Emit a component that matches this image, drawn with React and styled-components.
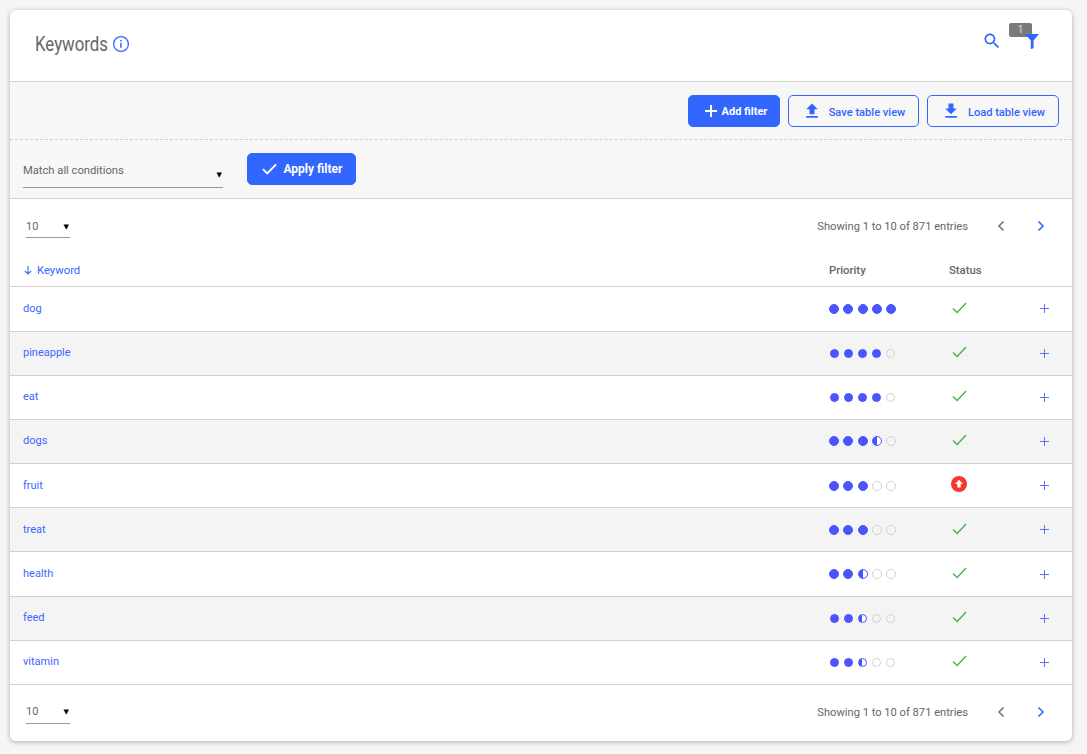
import React from 'react';
import styled, { createGlobalStyle } from 'styled-components';

const Global = createGlobalStyle`
  html, body { margin: 0; padding: 0; background: #f5f5f5; }
  body { font-family: Roboto, "Liberation Sans", sans-serif; color: #666; font-size: 12px; }
  * { box-sizing: border-box; }
`;

const BLUE = '#3366ff';
const DOT = '#4a55ff';

const Page = styled.div`
  padding: 10px 15px 13px 10px;
  height: 754px;
  overflow: hidden;
`;
const Card = styled.main`
  background: #fff;
  border-radius: 6px;
  box-shadow: 0 1px 5px rgba(0, 0, 0, 0.3);
  height: 731px;
  overflow: hidden;
`;
const Header = styled.header`
  height: 72px;
  border-bottom: 1px solid #d2d2d2;
  padding: 0 33px 0 25px;
  display: flex;
  align-items: center;
  justify-content: space-between;
`;
const TitleWrap = styled.div`
  display: flex;
  align-items: center;
  gap: 5px;
  margin-top: -3px;
`;
const Title = styled.h1`
  margin: 0;
  font-size: 20px;
  line-height: 24px;
  font-weight: 400;
  color: #666;
  width: 72px;
  white-space: nowrap;
  transform: scaleX(0.84);
  transform-origin: left center;
`;
const HeaderActions = styled.div`
  display: flex;
  align-items: center;
  gap: 26px;
  margin-top: -9px;
`;
const FilterIconWrap = styled.div`
  position: relative;
  width: 14px;
  height: 15px;
  display: flex;
  & > svg { position: relative; z-index: 1; }
`;
const Badge = styled.span`
  position: absolute;
  left: -16px;
  top: -11px;
  width: 23px;
  height: 14px;
  background: #7a7a7a;
  color: #ddd;
  border-radius: 2px;
  font-size: 10px;
  line-height: 13px;
  text-align: center;
`;
const Toolbar = styled.div`
  height: 58px;
  background: #f7f7f7;
  border-bottom: 1px dashed #cfcfcf;
  padding: 13px 13px 0 0;
  display: flex;
  justify-content: flex-end;
  gap: 8px;
`;
const Button = styled.button`
  height: 32px;
  width: ${p => p.$w}px;
  border-radius: 5px;
  border: 1px solid ${BLUE};
  background: ${p => (p.$solid ? BLUE : 'transparent')};
  color: ${p => (p.$solid ? '#fff' : BLUE)};
  font-family: Roboto, "Liberation Sans", sans-serif;
  font-size: ${p => p.$fs}px;
  font-weight: ${p => (p.$solid ? 700 : 500)};
  display: flex;
  align-items: center;
  justify-content: center;
  gap: ${p => p.$gap}px;
  padding: 0 0 0 ${p => p.$pl || 0}px;
`;
const OutlineLabel = styled.span`
  margin-top: 2px;
`;
const FilterRow = styled.div`
  height: 59px;
  background: #f7f7f7;
  border-bottom: 1px solid #d2d2d2;
  padding: 13px 0 0 13px;
  display: flex;
  align-items: flex-start;
  gap: 24px;
`;
const Select = styled.div`
  width: ${p => p.$w}px;
  height: ${p => p.$h}px;
  border-bottom: 1px solid #9a9a9a;
  display: flex;
  justify-content: space-between;
  color: #666;
  font-size: ${p => p.$fs}px;
  padding-top: ${p => p.$top}px;
  line-height: 14px;
`;
const Arrow = styled.span`
  color: #000;
  font-size: 7px;
  line-height: 14px;
  margin-top: ${p => p.$drop}px;
  margin-right: 1px;
  font-family: "DejaVu Sans", sans-serif;
`;
const Pager = styled.div`
  height: ${p => p.$h}px;
  padding: ${p => p.$top}px 25px 0 16px;
  display: flex;
  align-items: flex-start;
  justify-content: space-between;
`;
const PagerRight = styled.div`
  display: flex;
  align-items: center;
  height: 16px;
  margin-top: 3px;
`;
const Entries = styled.span`
  font-size: 11.15px;
  color: #666;
  margin-right: 27px;
`;
const ChevButton = styled.span`
  display: flex;
  width: 12px;
  justify-content: center;
  margin-right: ${p => p.$mr}px;
`;
const Grid = styled.div`
  display: grid;
  grid-template-columns: 806px 120px 1fr 40px;
  align-items: center;
  padding-left: 13px;
`;
const HeadRow = styled(Grid)`
  height: 35.32px;
  border-bottom: 1px solid #d2d2d2;
  font-size: 11.3px;
  font-weight: 500;
  color: #666;
  padding-top: 2px;
`;
const SortHead = styled.span`
  color: ${BLUE};
  display: flex;
  align-items: center;
  gap: 4px;
  font-weight: 400;
`;
const Row = styled(Grid)`
  height: 44.19px;
  border-bottom: 1px solid #d2d2d2;
  background: ${p => (p.$alt ? '#f4f4f4' : '#fff')};
`;
const KeywordLink = styled.a`
  color: #3f66ff;
  font-size: 11px;
  margin-top: -1px;
`;
const Dots = styled.div`
  display: flex;
  align-items: center;
  width: 67px;
  justify-content: space-between;
  padding: 0 ${p => (p.$small ? 1 : 0)}px;
`;
const Dot = styled.span`
  width: ${p => p.$size}px;
  height: ${p => p.$size}px;
  border-radius: 50%;
  border: 1px solid ${p => (p.$v === 0 ? '#d2d2d2' : DOT)};
  background: ${p =>
    p.$v === 1 ? DOT : p.$v === 0.5 ? `linear-gradient(90deg, ${DOT} 50%, #fff 50%)` : 'transparent'};
`;
const StatusCell = styled.div`
  display: flex;
  padding-left: ${p => p.$pad}px;
  margin-top: ${p => p.$mt}px;
`;
const PlusCell = styled.div`
  display: flex;
  margin-left: 8px;
`;

const SearchIcon = () => (
  <svg width="20" height="20" viewBox="0 0 24 24" fill={BLUE} style={{ margin: '0 -3px' }}>
    <path d="M15.5 14h-.79l-.28-.27C15.41 12.59 16 11.11 16 9.5 16 5.91 13.09 3 9.5 3S3 5.91 3 9.5 5.91 16 9.5 16c1.61 0 3.09-.59 4.23-1.57l.27.28v.79l5 4.99L20.49 19l-4.99-5zm-6 0C7.01 14 5 11.99 5 9.5S7.01 5 9.5 5 14 7.01 14 9.5 11.99 14 9.5 14z" />
  </svg>
);
const InfoIcon = () => (
  <svg width="18" height="18" viewBox="0 0 18 18" fill="none">
    <circle cx="9" cy="9" r="7.4" stroke={BLUE} strokeWidth="1.3" />
    <rect x="8.2" y="7.8" width="1.5" height="5" fill={DOT} />
    <rect x="8.2" y="5" width="1.5" height="1.5" fill={DOT} />
  </svg>
);
const FunnelIcon = () => (
  <svg width="14" height="15" viewBox="0 0 14 15" fill={BLUE}>
    <path d="M0 0h14L8.6 6.6V14.2L5.8 15V6.6z" />
  </svg>
);
const PlusWhite = () => (
  <svg width="14" height="14" viewBox="0 0 14 14" stroke="#fff" strokeWidth="2">
    <path d="M7 1v12M1 7h12" />
  </svg>
);
const CheckWhite = () => (
  <svg width="15" height="12" viewBox="0 0 16 12" fill="none" stroke="#fff" strokeWidth="2">
    <path d="M1 6.2l4.6 4.4L15 1" />
  </svg>
);
const UploadIcon = () => (
  <svg width="20" height="20" viewBox="0 0 24 24" fill={BLUE}>
    <path d="M9 16h6v-6h4l-7-7-7 7h4zm-4 2h14v2H5z" />
  </svg>
);
const DownloadIcon = () => (
  <svg width="20" height="20" viewBox="0 0 24 24" fill={BLUE}>
    <path d="M19 9h-4V3H9v6H5l7 7 7-7zM5 18v2h14v-2H5z" />
  </svg>
);
const Chevron = ({ dir, color }) => (
  <svg width="8" height="12" viewBox="0 0 8 12" fill="none" stroke={color} strokeWidth="1.6">
    <path d={dir === 'left' ? 'M6.5 1.5L2 6l4.5 4.5' : 'M1.5 1.5L6 6l-4.5 4.5'} />
  </svg>
);
const DownArrow = () => (
  <svg width="10" height="10" viewBox="0 0 10 10" fill="none" stroke={BLUE} strokeWidth="1.1">
    <path d="M5 1v8M1.8 5.8L5 9l3.2-3.2" />
  </svg>
);
const CheckGreen = () => (
  <svg width="15" height="12" viewBox="0 0 15 12" fill="none" stroke="#4caf50" strokeWidth="1.4">
    <path d="M1 6.5l4.2 4L14 1" />
  </svg>
);
const AlertIcon = () => (
  <svg width="16" height="16" viewBox="0 0 16 16">
    <circle cx="8" cy="8" r="8" fill="#f4372f" />
    <path d="M8 3.8L12 8H9.7v3.6H6.3V8H4z" fill="#fff" />
  </svg>
);
const PlusBlue = () => (
  <svg width="9" height="9" viewBox="0 0 9 9" stroke="#5a70ff" strokeWidth="1" shapeRendering="crispEdges">
    <path d="M4.5 0v9M0 4.5h9" />
  </svg>
);

const PagerBar = ({ h, top, selH, selTop }) => (
  <Pager $h={h} $top={top}>
    <Select $w={44} $h={selH} $top={selTop} $fs={11}>
      10
      <Arrow $drop={0}>▼</Arrow>
    </Select>
    <PagerRight>
      <Entries>Showing 1 to 10 of 871 entries</Entries>
      <ChevButton $mr={28}><Chevron dir="left" color="#777" /></ChevButton>
      <ChevButton $mr={0}><Chevron dir="right" color={BLUE} /></ChevButton>
    </PagerRight>
  </Pager>
);

const rows = [
  { k: 'dog', d: [1, 1, 1, 1, 1], big: true },
  { k: 'pineapple', d: [1, 1, 1, 1, 0] },
  { k: 'eat', d: [1, 1, 1, 1, 0] },
  { k: 'dogs', d: [1, 1, 1, 0.5, 0], big: true },
  { k: 'fruit', d: [1, 1, 1, 0, 0], big: true, alert: true },
  { k: 'treat', d: [1, 1, 1, 0, 0], big: true },
  { k: 'health', d: [1, 1, 0.5, 0, 0], big: true },
  { k: 'feed', d: [1, 1, 0.5, 0, 0] },
  { k: 'vitamin', d: [1, 1, 0.5, 0, 0] },
];

export default function App() {
  return (
    <Page>
      <Global />
      <Card>
        <Header>
          <TitleWrap>
            <Title>Keywords</Title>
            <InfoIcon />
          </TitleWrap>
          <HeaderActions>
            <SearchIcon />
            <FilterIconWrap>
              <Badge>1</Badge>
              <FunnelIcon />
            </FilterIconWrap>
          </HeaderActions>
        </Header>
        <Toolbar>
          <Button $solid $w={92} $gap={4} $fs={11} $pl={3}><PlusWhite />Add filter</Button>
          <Button $w={131} $gap={7} $fs={11.1}><UploadIcon /><OutlineLabel>Save table view</OutlineLabel></Button>
          <Button $w={132} $gap={7} $fs={11.1}><DownloadIcon /><OutlineLabel>Load table view</OutlineLabel></Button>
        </Toolbar>
        <FilterRow>
          <Select $w={200} $h={35} $top={11} $fs={11.2}>
            Match all conditions
            <Arrow $drop={4}>▼</Arrow>
          </Select>
          <Button $solid $w={109} $gap={6} $fs={12} $pl={2}><CheckWhite />Apply filter</Button>
        </FilterRow>
        <PagerBar h={53} top={16} selH={23} selTop={5} />
        <HeadRow>
          <SortHead><DownArrow />Keyword</SortHead>
          <span>Priority</span>
          <span>Status</span>
          <span />
        </HeadRow>
        {rows.map((r, i) => (
          <Row key={r.k} $alt={i % 2 === 1}>
            <KeywordLink>{r.k}</KeywordLink>
            <Dots $small={!r.big}>
              {r.d.map((v, j) => (
                <Dot key={j} $v={v} $size={r.big ? 10 : 9} />
              ))}
            </Dots>
            <StatusCell $pad={r.alert ? 1.5 : 2.5} $mt={r.alert ? -3 : -2}>
              {r.alert ? <AlertIcon /> : <CheckGreen />}
            </StatusCell>
            <PlusCell><PlusBlue /></PlusCell>
          </Row>
        ))}
        <PagerBar h={55} top={16} selH={23} selTop={4} />
      </Card>
    </Page>
  );
}
